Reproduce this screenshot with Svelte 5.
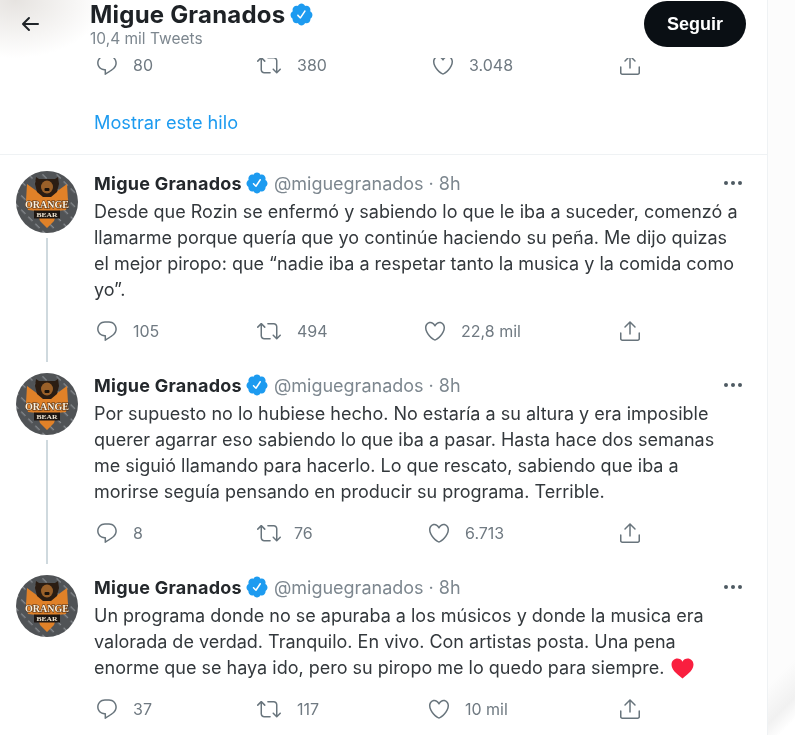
<script>
  const tweets = [
    {
      lines: [
        'Desde que Rozin se enfermó y sabiendo lo que le iba a suceder, comenzó a',
        'llamarme porque quería que yo continúe haciendo su peña. Me dijo quizas',
        'el mejor piropo: que “nadie iba a respetar tanto la musica y la comida como',
        'yo”.'
      ],
      thread: true,
      stats: { reply: '105', rt: '494', like: '22,8 mil', rtGap: 2, likeShift: -4 }
    },
    {
      lines: [
        'Por supuesto no lo hubiese hecho. No estaría a su altura y era imposible',
        'querer agarrar eso sabiendo lo que iba a pasar. Hasta hace dos semanas',
        'me siguió llamando para hacerlo. Lo que rescato, sabiendo que iba a',
        'morirse seguía pensando en producir su programa. Terrible.'
      ],
      thread: true,
      stats: { reply: '8', rt: '76', like: '6.713', rtGap: -1, likeShift: 0 }
    },
    {
      lines: [
        'Un programa donde no se apuraba a los músicos y donde la musica era',
        'valorada de verdad. Tranquilo. En vivo. Con artistas posta. Una pena',
        'enorme que se haya ido, pero su piropo me lo quedo para siempre.'
      ],
      thread: false,
      heart: true,
      stats: { reply: '37', rt: '117', like: '10 mil', rtGap: 2, likeShift: 0 }
    }
  ];
  const topStats = { reply: '80', rt: '380', like: '3.048', rtGap: 2, likeShift: 4 };

  const replyPath = 'M14.046 2.242l-4.148-.01h-.002c-4.374 0-7.8 3.427-7.8 7.802 0 4.098 3.186 7.206 7.465 7.37v3.828c0 .108.044.286.12.403.142.225.384.347.632.347.138 0 .277-.038.402-.118.264-.168 6.473-4.14 8.088-5.506 1.902-1.61 3.04-3.97 3.043-6.312v-.017c-.006-4.367-3.43-7.787-7.8-7.788zm3.787 12.972c-1.134.96-4.862 3.405-6.772 4.643V16.67c0-.414-.335-.75-.75-.75h-.396c-3.66 0-6.318-2.476-6.318-5.886 0-3.534 2.768-6.302 6.3-6.302l4.147.01h.002c3.532 0 6.3 2.766 6.302 6.296-.003 1.91-.942 3.844-2.514 5.176z';
  const rtPath = 'M23.77 15.67c-.292-.293-.767-.293-1.06 0l-2.22 2.22V7.65c0-2.068-1.683-3.75-3.75-3.75h-5.85c-.414 0-.75.336-.75.75s.336.75.75.75h5.85c1.24 0 2.25 1.01 2.25 2.25v10.24l-2.22-2.22c-.293-.293-.768-.293-1.06 0s-.294.768 0 1.06l3.5 3.5c.145.147.337.22.53.22s.383-.072.53-.22l3.5-3.5c.294-.292.294-.767 0-1.06zm-10.66 3.28H7.26c-1.24 0-2.25-1.01-2.25-2.25V6.46l2.22 2.22c.148.147.34.22.532.22s.384-.073.53-.22c.293-.293.293-.768 0-1.06l-3.5-3.5c-.293-.294-.768-.294-1.06 0l-3.5 3.5c-.294.292-.294.767 0 1.06s.767.293 1.06 0l2.22-2.22V16.7c0 2.068 1.683 3.75 3.75 3.75h5.85c.414 0 .75-.336.75-.75s-.337-.75-.75-.75z';
  const heartPath = 'M12 21.638h-.014C9.403 21.59 1.95 14.856 1.95 8.478c0-3.064 2.525-5.754 5.403-5.754 2.29 0 3.83 1.58 4.646 2.73.814-1.148 2.354-2.73 4.645-2.73 2.88 0 5.404 2.69 5.404 5.755 0 6.376-7.454 13.11-10.037 13.157H12zM7.354 4.225c-2.08 0-3.903 1.988-3.903 4.255 0 5.74 7.034 11.596 8.55 11.658 1.518-.062 8.55-5.917 8.55-11.658 0-2.267-1.823-4.255-3.903-4.255-2.528 0-3.94 2.936-3.952 2.965-.23.562-1.156.562-1.387 0-.014-.03-1.425-2.965-3.954-2.965z';
  const sharePath = 'M17.53 7.47l-5-5c-.293-.293-.768-.293-1.06 0l-5 5c-.294.293-.294.768 0 1.06s.767.294 1.06 0l3.72-3.72V15c0 .414.336.75.75.75s.75-.336.75-.75V4.81l3.72 3.72c.146.147.338.22.53.22s.384-.072.53-.22c.293-.293.293-.767 0-1.06zM19.708 21.944H4.292C3.028 21.944 2 20.916 2 19.652V14c0-.414.336-.75.75-.75s.75.336.75.75v5.652c0 .437.355.792.792.792h15.416c.437 0 .792-.355.792-.792V14c0-.414.336-.75.75-.75s.75.336.75.75v5.652c0 1.264-1.028 2.292-2.292 2.292z';
  const badgePath = 'M22.5 12.5c0-1.58-.875-2.95-2.148-3.6.154-.435.238-.905.238-1.4 0-2.21-1.71-3.998-3.818-3.998-.47 0-.92.084-1.336.25C14.818 2.415 13.51 1.5 12 1.5s-2.816.917-3.437 2.25c-.415-.165-.866-.25-1.336-.25-2.11 0-3.818 1.79-3.818 4 0 .494.083.964.237 1.4-1.272.65-2.147 2.018-2.147 3.6 0 1.495.782 2.798 1.942 3.486-.02.17-.032.34-.032.514 0 2.21 1.708 4 3.818 4 .47 0 .92-.086 1.335-.25.62 1.334 1.926 2.25 3.437 2.25 1.512 0 2.818-.916 3.437-2.25.415.163.865.248 1.336.248 2.11 0 3.818-1.79 3.818-4 0-.174-.012-.344-.033-.513 1.158-.687 1.943-1.99 1.943-3.484zm-6.616-3.334l-4.334 6.5c-.145.217-.382.334-.625.334-.143 0-.288-.04-.416-.126l-.115-.094-2.415-2.415c-.293-.293-.293-.768 0-1.06s.768-.294 1.06 0l1.77 1.767 3.825-5.74c.23-.345.696-.436 1.04-.207.346.23.44.696.21 1.04z';
</script>

{#snippet badge(cls)}
  <svg class={cls} viewBox="0 0 24 24" aria-label="Verificada">
    <circle cx="12" cy="12" r="7" fill="#fff" />
    <path d={badgePath} fill="#1d9bf0" />
  </svg>
{/snippet}

{#snippet actions(s)}
  <div class="actions">
    <div class="act">
      <svg viewBox="0 0 24 24"><path d={replyPath} /></svg>
      <span class="count">{s.reply}</span>
    </div>
    <div class="act">
      <svg viewBox="0 0 24 24"><path d={rtPath} /></svg>
      <span class="count" style:margin-left="{s.rtGap}px">{s.rt}</span>
    </div>
    <div class="act" style:margin-left="{s.likeShift}px">
      <svg viewBox="0 0 24 24"><path d={heartPath} /></svg>
      <span class="count">{s.like}</span>
    </div>
    <div class="act">
      <svg viewBox="0 0 24 24"><path d={sharePath} /></svg>
    </div>
  </div>
{/snippet}

{#snippet avatar()}
  <svg class="avatar" viewBox="0 0 62 62">
    <defs>
      <pattern id="plate" width="10" height="10" patternUnits="userSpaceOnUse" patternTransform="rotate(45)">
        <rect width="10" height="10" fill="#505356" />
        <rect x="1" y="3" width="6" height="1.3" fill="#85898d" />
      </pattern>
    </defs>
    <circle cx="31" cy="31" r="31" fill="url(#plate)" />
    <path d="M11 13l11 8h18l11-8 1 17-2 9-9 1-3 10-7 7-7-7-3-10-9-1-2-9z" fill="#e08128" />
    <path d="M20 6l3 2h16l3-2 1 7-2 8-6 5h-8l-6-5-2-8z" fill="#2b1d13" />
    <ellipse cx="31" cy="16" rx="6" ry="6.500" fill="#9a6029" />
    <rect x="28.5" y="17" width="5" height="3" rx="1" fill="#1a120c" />
    <text class="t1" x="31" y="37" textLength="44" lengthAdjust="spacingAndGlyphs">ORANGE</text>
    <rect x="18" y="39.500" width="26" height="8" fill="#1d1612" />
    <text class="t2" x="31" y="46.300" textLength="21" lengthAdjust="spacingAndGlyphs">BEAR</text>
  </svg>
{/snippet}

<div class="page">
  <div class="column">
    <header class="top">
      <svg class="back" viewBox="0 0 24 24"><path d="M20 11H7.414l4.293-4.293a1 1 0 0 0-1.414-1.414l-6 6a1 1 0 0 0 0 1.414l6 6a1 1 0 0 0 1.414-1.414L7.414 13H20a1 1 0 1 0 0-2z" /></svg>
      <div class="title">
        <div class="title-name">Migue Granados {@render badge('badge-lg')}</div>
        <div class="title-sub">10,4 mil Tweets</div>
      </div>
      <button class="follow">Seguir</button>
    </header>

    <section class="prev">
      <div class="prev-actions">{@render actions(topStats)}</div>
      <div class="show">Mostrar este hilo</div>
    </section>

    {#each tweets as t}
      <article class="tweet">
        <div class="side">
          {@render avatar()}
          {#if t.thread}<div class="thread"></div>{/if}
        </div>
        <div class="main">
          <div class="meta">
            <span class="name">Migue Granados</span>
            {@render badge('badge-sm')}
            <span class="handle">@miguegranados · 8h</span>
            <span class="more"><i></i><i></i><i></i></span>
          </div>
          <div class="text">
            {#each t.lines as line, i}
              <span class="line">{line}{#if t.heart && i === t.lines.length - 1}<svg class="emoji" viewBox="0 0 24 22"><path d="M12 21.5C5 16 .5 12 .5 6.8.5 3 3.4.5 6.6.5 9 .5 11 1.7 12 3.8 13 1.7 15 .5 17.4.5c3.2 0 6.1 2.5 6.1 6.3C23.500 12 19 16 12 21.500z" /></svg>{/if}</span>
            {/each}
          </div>
          {@render actions(t.stats)}
        </div>
      </article>
    {/each}
  </div>
  <div class="edge"></div>
</div>

<style>
  :global(body) {
    margin: 0;
    background: #fff;
  }
  .page {
    width: 795px;
    height: 735px;
    overflow: hidden;
    display: flex;
    font-family: "Inter", "Liberation Sans", sans-serif;
    color: #2c3135;
    filter: blur(0.5px);
  }
  .column {
    width: 767px;
    flex: none;
    border-right: 1px solid #eff2f4;
    background: #fff;
  }
  .edge {
    flex: 1;
    background: linear-gradient(135deg, #fcfcfc 90%, #f1f1f1 95%, #fff 98%);
  }
  .top {
    position: relative;
    z-index: 2;
    height: 58px;
    box-sizing: border-box;
    display: flex;
    align-items: flex-start;
    background:
      radial-gradient(ellipse 90px 58px at 15px 0px, #e6e3e0 0%, rgba(255,255,255,0) 100%),
      #fff;
  }
  .back {
    width: 24px;
    height: 24px;
    margin: 12px 0 0 18px;
    fill: #1f2428;
  }
  .title {
    margin-left: 48px;
    flex: 1;
  }
  .title-name {
    display: flex;
    align-items: center;
    gap: 4px;
    height: 28px;
    font-size: 24px;
    font-weight: 700;
    color: #1e2226;
    letter-spacing: 0.2px;
  }
  .title-sub {
    margin-top: 1px;
    font-size: 15.5px;
    line-height: 20px;
    color: #7d878f;
  }
  .badge-lg {
    width: 25px;
    height: 25px;
  }
  .badge-sm {
    width: 24px;
    height: 24px;
    margin: 0 5px 0 3px;
  }
  .follow {
    width: 102px;
    height: 46px;
    margin: 1px 21px 0 0;
    border: none;
    border-radius: 23px;
    background: #0a0f14;
    color: #fff;
    font-family: "Liberation Sans", sans-serif;
    font-size: 18px;
    font-weight: 700;
  }
  .prev {
    height: 107px;
    margin-top: -11px;
    padding-left: 94px;
    border-bottom: 1px solid #eff2f4;
  }
  .show {
    margin-top: 26px;
    font-size: 18.2px;
    line-height: 26px;
    color: #1d9bf0;
  }
  .tweet {
    display: flex;
    height: 202px;
    box-sizing: border-box;
    padding: 15px 0 8px 16px;
  }
  .side {
    flex: none;
    display: flex;
    flex-direction: column;
    align-items: center;
    width: 62px;
    margin-right: 16px;
  }
  .avatar {
    width: 62px;
    height: 62px;
    margin-top: 1px;
    flex: none;
  }
  .t1 {
    font-family: "Liberation Serif", serif;
    font-size: 11px;
    font-weight: 700;
    fill: #fbf0dc;
    stroke: #4a2a12;
    stroke-width: 1.2px;
    paint-order: stroke;
    text-anchor: middle;
  }
  .t2 {
    font-family: "Liberation Serif", serif;
    font-size: 6.5px;
    font-weight: 700;
    fill: #f0e5d2;
    text-anchor: middle;
  }
  .thread {
    flex: 1;
    width: 2px;
    margin-top: 5px;
    margin-bottom: -13px;
    background: #cfd9de;
  }
  .main {
    flex: 1;
    min-width: 0;
  }
  .meta {
    display: flex;
    align-items: center;
    height: 26px;
    font-size: 18px;
  }
  .name {
    font-weight: 700;
    color: #24282c;
    letter-spacing: 0.25px;
  }
  .handle {
    color: #7d878f;
  }
  .more {
    margin-left: auto;
    margin-right: 25px;
    display: flex;
    gap: 3px;
  }
  .more i {
    width: 4px;
    height: 4px;
    border-radius: 50%;
    background: #4e5a62;
  }
  .text {
    margin-top: 3px;
    min-height: 78px;
    font-size: 18px;
    line-height: 26px;
    color: #33383c;
  }
  .line {
    display: flex;
    align-items: center;
    white-space: nowrap;
    height: 26px;
  }
  .emoji {
    width: 23px;
    height: 21px;
    margin-left: 7px;
    fill: #f91f3f;
  }
  .actions {
    display: grid;
    grid-template-columns: 162px 170px 191px auto;
    height: 36px;
    margin-top: 10px;
    align-items: center;
    color: #6d777f;
  }
  .act {
    display: flex;
    align-items: center;
    gap: 14px;
    padding-left: 1px;
  }
  .act svg {
    width: 24px;
    height: 24px;
    fill: #68747c;
    flex: none;
  }
  .count {
    font-size: 16px;
    color: #707a82;
  }
  .prev-actions .actions {
    margin-top: 0;
  }
</style>
